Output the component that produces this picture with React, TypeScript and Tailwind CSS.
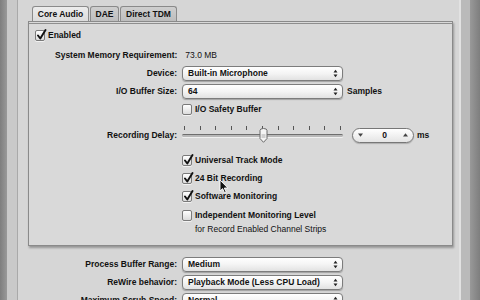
const font = { fontFamily: '"Liberation Sans", Arial, sans-serif' };

const Check = ({ checked }: { checked?: boolean }) => (
  <div className="relative w-[10px] h-[11px] shrink-0 rounded-[2px] border border-[#7a7a7a] bg-gradient-to-b from-white to-[#dcdcdc] shadow-[0_1px_0_#f2f2f2]">
    {checked && (
      <svg className="absolute -top-[2px] left-0" width="11" height="12" viewBox="0 0 11 12">
        <path d="M2 6.5 L4.3 9.5 L9.5 1" fill="none" stroke="#111" strokeWidth="1.9" strokeLinecap="round" strokeLinejoin="round" />
      </svg>
    )}
  </div>
);

const Arrows = () => (
  <svg width="5" height="9" viewBox="0 0 5 9">
    <path d="M0.5 3.5 L2.5 0.8 L4.5 3.5Z" fill="#222" />
    <path d="M0.5 5.5 L2.5 8.2 L4.5 5.5Z" fill="#222" />
  </svg>
);

const Popup = ({ value }: { value: string }) => (
  <div className="w-[161px] h-[15px] shrink-0 flex items-center justify-between pl-[5px] pr-[4px] rounded-[4px] border border-[#7c7c7c] bg-gradient-to-b from-white via-[#f4f4f4] to-[#e2e2e2] shadow-[0_1px_1px_rgba(0,0,0,0.25)]">
    <span className="text-[8.5px] font-bold text-[#111] leading-none whitespace-nowrap">{value}</span>
    <Arrows />
  </div>
);

const Label = ({ children, w }: { children: string; w: string }) => (
  <div className={`${w} shrink-0 text-right text-[8.5px] font-bold text-[#111] leading-none whitespace-nowrap`}>{children}</div>
);

const CheckRow = ({ label, checked, h }: { label: string; checked?: boolean; h: string }) => (
  <div className={`flex items-center shrink-0 ${h}`}>
    <div className="w-[153px] shrink-0" />
    <Check checked={checked} />
    <span className="ml-[3px] text-[8.5px] font-bold text-[#111] leading-none whitespace-nowrap">{label}</span>
  </div>
);

const ticks = [0, 1, 2, 3, 4, 5, 6, 7, 8, 9, 10];

export default function App() {
  return (
    <div className="w-[480px] h-[300px] overflow-hidden flex bg-[#d6d6d6] relative" style={font}>
      <div className="w-[7px] shrink-0 bg-gradient-to-r from-[#7e7e7e] to-[#999999]" />
      <div className="w-[11px] shrink-0 bg-[#c9c9c9] border-r border-[#a9a9a9]" />

      <div className="w-[441px] shrink-0 pl-[10px] pr-[6px] pt-[6px]">
        {/* tabs */}
        <div className="flex pl-[4px] h-[15px] items-end">
          <div className="w-[57px] h-[15px] flex items-center justify-center rounded-t-[3px] border border-b-0 border-[#8a8a8a] bg-gradient-to-b from-[#ececec] to-[#dcdcdc] text-[8.5px] font-bold text-[#111] whitespace-nowrap">
            Core Audio
          </div>
          <div className="ml-[1px] w-[29px] h-[15px] flex items-center justify-center rounded-t-[3px] border border-b-0 border-[#8a8a8a] bg-gradient-to-b from-[#cfcfcf] to-[#bdbdbd] text-[8.5px] font-bold text-[#111]">
            DAE
          </div>
          <div className="ml-[1px] w-[57px] h-[15px] flex items-center justify-center rounded-t-[3px] border border-b-0 border-[#8a8a8a] bg-gradient-to-b from-[#cfcfcf] to-[#bdbdbd] text-[8.5px] font-bold text-[#111] whitespace-nowrap">
            Direct TDM
          </div>
        </div>

        {/* group box */}
        <div className="w-[425px] border border-[#8a8a8a] bg-[#d9d9d9] shadow-[1px_2px_2px_rgba(0,0,0,0.3)]">
          <div className="h-px mt-px bg-[#8e8e8e]" />

          <div className="flex items-center h-[23px] pl-[6px]">
            <Check checked />
            <span className="ml-[3px] text-[8.5px] font-bold text-[#111] leading-none">Enabled</span>
          </div>

          <div className="flex items-center h-[17px]">
            <div className="w-[26px] shrink-0" />
            <span className="text-[8.5px] font-bold text-[#111] leading-none whitespace-nowrap">System Memory Requirement:</span>
            <span className="ml-[8px] text-[8.5px] text-[#111] leading-none">73.0 MB</span>
          </div>

          <div className="flex items-center h-[18px] gap-[5px]">
            <Label w="w-[148px]">Device:</Label>
            <Popup value="Built-in Microphone" />
          </div>

          <div className="flex items-center h-[18px] gap-[5px]">
            <Label w="w-[148px]">I/O Buffer Size:</Label>
            <Popup value="64" />
            <span className="-ml-px text-[8.5px] font-bold text-[#111] leading-none">Samples</span>
          </div>

          <CheckRow label="I/O Safety Buffer" h="h-[19px]" />

          {/* recording delay */}
          <div className="flex items-center h-[32px] gap-[5px]">
            <Label w="w-[148px]">Recording Delay:</Label>
            <div className="relative w-[161px] h-[32px] shrink-0">
              <div className="absolute left-[2px] right-[2px] top-[7px] flex justify-between">
                {ticks.map((t) => (
                  <div key={t} className="w-px h-[4px] bg-[#555]" />
                ))}
              </div>
              <div className="absolute left-0 right-0 top-[15px] h-[3px] rounded-full bg-[#b8b8b8] border-t border-[#6e6e6e] shadow-[0_1px_0_#f0f0f0]" />
              <svg className="absolute left-[77px] top-[9px]" width="9" height="15" viewBox="0 0 9 15">
                <path d="M1 2.5 Q1 0.5 4.5 0.5 Q8 0.5 8 2.5 L8 10.5 L4.5 14.3 L1 10.5Z" fill="#f4f4f4" stroke="#6a6a6a" strokeWidth="1" />
                <path d="M2.5 7 L6.5 7 M2.5 9 L6.5 9" stroke="#9a9a9a" strokeWidth="0.8" />
              </svg>
            </div>
            <div className="ml-[4px] w-[62px] h-[15px] shrink-0 flex items-center justify-between px-[5px] rounded-full border border-[#777] bg-gradient-to-b from-white to-[#e4e4e4] shadow-[0_1px_1px_rgba(0,0,0,0.2)]">
              <svg width="5" height="4" viewBox="0 0 5 4"><path d="M0 0.5 L5 0.5 L2.5 3.8Z" fill="#444" /></svg>
              <span className="ml-auto mr-[16px] text-[8.5px] font-bold text-[#111] leading-none">0</span>
              <svg width="5" height="4" viewBox="0 0 5 4"><path d="M0 3.5 L5 3.5 L2.5 0.2Z" fill="#444" /></svg>
            </div>
            <span className="-ml-[2px] text-[8.5px] font-bold text-[#111] leading-none">ms</span>
          </div>

          <CheckRow label="Universal Track Mode" checked h="h-[18px]" />
          <CheckRow label="24 Bit Recording" checked h="h-[18px]" />
          <CheckRow label="Software Monitoring" checked h="h-[19px]" />
          <CheckRow label="Independent Monitoring Level" h="h-[18px]" />
          <div className="flex items-center h-[10px]">
            <div className="w-[166px] shrink-0" />
            <span className="text-[8.5px] text-[#111] leading-none whitespace-nowrap">for Record Enabled Channel Strips</span>
          </div>
          <div className="h-[11px]" />
        </div>

        <div className="h-[9px]" />
        <div className="flex items-center h-[18px] gap-[5px]">
          <Label w="w-[149px]">Process Buffer Range:</Label>
          <Popup value="Medium" />
        </div>
        <div className="flex items-center h-[18px] gap-[5px]">
          <Label w="w-[149px]">ReWire behavior:</Label>
          <Popup value="Playback Mode (Less CPU Load)" />
        </div>
        <div className="flex items-center h-[18px] gap-[5px]">
          <Label w="w-[149px]">Maximum Scrub Speed:</Label>
          <Popup value="Normal" />
        </div>
      </div>

      <div className="w-[2px] shrink-0 bg-[#e2e2e2]" />
      <div className="w-[9px] shrink-0 bg-[#bababa]" />
      <div className="w-[10px] shrink-0 bg-gradient-to-r from-[#999999] to-[#7e7e7e]" />

      {/* mouse pointer */}
      <svg className="absolute left-[219px] top-[179px]" width="10" height="15" viewBox="0 0 10 15">
        <path d="M1 1 L1 12 L3.6 9.6 L5.6 14 L7.2 13.3 L5.3 9 L8.8 9Z" fill="#111" stroke="#fff" strokeWidth="0.9" strokeLinejoin="round" />
      </svg>
    </div>
  );
}
